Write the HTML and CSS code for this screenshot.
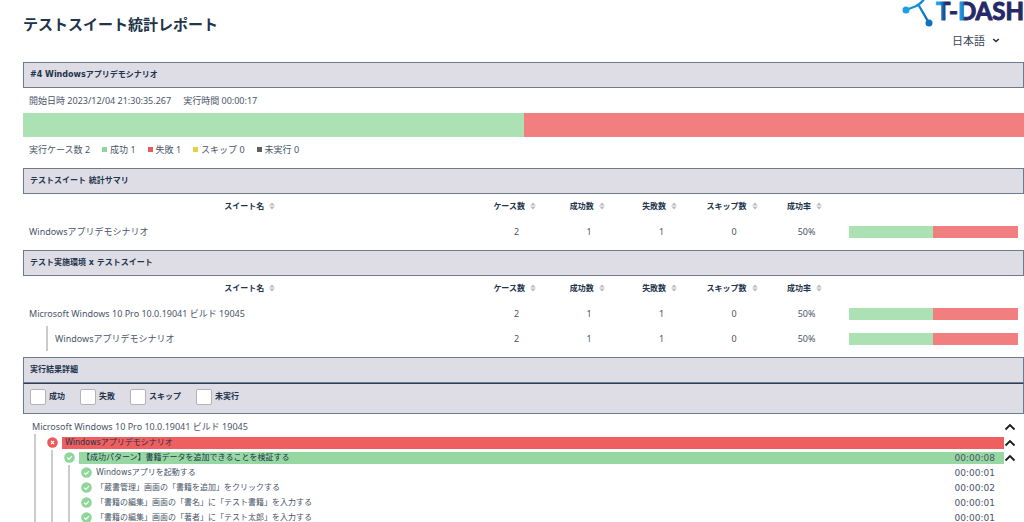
FILE: index.html
```html
<!DOCTYPE html>
<html lang="ja">
<head>
  <meta charset="UTF-8" />
  <meta name="viewport" content="width=device-width, initial-scale=1.0"/>
  <title>テストスイート統計レポート</title>
  <link rel="stylesheet" href="styles.css">
</head>
<body>
  <svg class="symbols" width="0" height="0" aria-hidden="true">
    <symbol id="sort" viewBox="0 0 6 8">
      <path d="M3 0.4 5.8 3.5H0.2zM3 7.6 0.2 4.5H5.8z" fill="#b9bdc6"/>
    </symbol>
    <symbol id="ok" viewBox="0 0 11 11">
      <circle cx="5.5" cy="5.5" r="5.3" fill="#8fd69b"/>
      <path d="M3.2 5.7 4.9 7.3 7.9 4.1" fill="none" stroke="#fff" stroke-width="1.2"/>
    </symbol>
    <symbol id="ng" viewBox="0 0 11 11">
      <circle cx="5.5" cy="5.5" r="5.3" fill="#ec5a5a"/>
      <path d="M4 4 7 7M7 4 4 7" fill="none" stroke="#fff" stroke-width="1.2"/>
    </symbol>
    <symbol id="up" viewBox="0 0 12 8">
      <path d="M1.5 6.5 6 2 10.5 6.5" fill="none" stroke="#1c1c1c" stroke-width="1.8"/>
    </symbol>
  </svg>

  <div class="page">
    <header class="header">
      <h1 class="title">テストスイート統計レポート</h1>
      <div class="brand">
        <svg class="logo" width="123" height="31" viewBox="0 0 123 31">
          <defs>
            <linearGradient id="mark" x1="0" y1="0" x2="1" y2="1">
              <stop offset="0" stop-color="#1ba4e6"/>
              <stop offset="1" stop-color="#0b66b5"/>
            </linearGradient>
            <linearGradient id="word" gradientUnits="userSpaceOnUse" x1="35" y1="0" x2="123" y2="0">
              <stop offset="0" stop-color="#12a5e8"/>
              <stop offset="0.04" stop-color="#12a5e8"/>
              <stop offset="0.11" stop-color="#232a66"/>
              <stop offset="0.25" stop-color="#232a66"/>
              <stop offset="0.26" stop-color="#129fe4"/>
              <stop offset="0.3" stop-color="#1a8bd6"/>
              <stop offset="0.33" stop-color="#232a66"/>
            </linearGradient>
          </defs>
          <path d="M5 10 14 6.500Q20 4 23-1M17 4 28 23" fill="none" stroke="url(#mark)" stroke-width="2.400"/>
          <circle cx="5" cy="10" r="3.500" fill="#1ba0e2"/>
          <circle cx="28" cy="23" r="3.500" fill="#0c74c0"/>
          <text class="logo-text" x="35" y="20">T-DASH</text>
        </svg>
        <select class="lang" aria-label="言語">
          <option>日本語</option>
          <option>English</option>
        </select>
      </div>
    </header>

    <section class="block">
      <h2 class="bar-title">#4 Windowsアプリデモシナリオ</h2>
      <p class="meta"><span>開始日時 2023/12/04 21:30:35.267</span><span>実行時間 00:00:17</span></p>
      <div class="ratio"><div class="pass" style="width: 50%"></div><div class="fail" style="width: 50%"></div></div>
      <ul class="legend">
        <li>実行ケース数 2</li>
        <li><i class="dot dot-pass"></i>成功 1</li>
        <li><i class="dot dot-fail"></i>失敗 1</li>
        <li><i class="dot dot-skip"></i>スキップ 0</li>
        <li><i class="dot dot-none"></i>未実行 0</li>
      </ul>
    </section>

    <section class="block">
      <h2 class="bar-title">テストスイート 統計サマリ</h2>
      <table class="stats">
        <thead>
          <tr>
            <th class="col-name">スイート名<svg class="sort"><use href="#sort"/></svg></th>
            <th>ケース数<svg class="sort"><use href="#sort"/></svg></th>
            <th>成功数<svg class="sort"><use href="#sort"/></svg></th>
            <th>失敗数<svg class="sort"><use href="#sort"/></svg></th>
            <th>スキップ数<svg class="sort"><use href="#sort"/></svg></th>
            <th>成功率<svg class="sort"><use href="#sort"/></svg></th>
            <th class="col-ratio"></th>
          </tr>
        </thead>
        <tbody>
          <tr>
            <td class="name">Windowsアプリデモシナリオ</td>
            <td>2</td><td>1</td><td>1</td><td>0</td><td>50%</td>
            <td><div class="ratio small"><div class="pass" style="width: 50%"></div><div class="fail" style="width: 50%"></div></div></td>
          </tr>
        </tbody>
      </table>
    </section>

    <section class="block">
      <h2 class="bar-title">テスト実施環境 x テストスイート</h2>
      <table class="stats">
        <thead>
          <tr>
            <th class="col-name">スイート名<svg class="sort"><use href="#sort"/></svg></th>
            <th>ケース数<svg class="sort"><use href="#sort"/></svg></th>
            <th>成功数<svg class="sort"><use href="#sort"/></svg></th>
            <th>失敗数<svg class="sort"><use href="#sort"/></svg></th>
            <th>スキップ数<svg class="sort"><use href="#sort"/></svg></th>
            <th>成功率<svg class="sort"><use href="#sort"/></svg></th>
            <th class="col-ratio"></th>
          </tr>
        </thead>
        <tbody>
          <tr>
            <td class="name">Microsoft Windows 10 Pro 10.0.19041 ビルド 19045</td>
            <td>2</td><td>1</td><td>1</td><td>0</td><td>50%</td>
            <td><div class="ratio small"><div class="pass" style="width: 50%"></div><div class="fail" style="width: 50%"></div></div></td>
          </tr>
          <tr>
            <td class="name child"><div class="child-name">Windowsアプリデモシナリオ</div></td>
            <td>2</td><td>1</td><td>1</td><td>0</td><td>50%</td>
            <td><div class="ratio small"><div class="pass" style="width: 50%"></div><div class="fail" style="width: 50%"></div></div></td>
          </tr>
        </tbody>
      </table>
    </section>

    <section class="block">
      <h2 class="bar-title">実行結果詳細</h2>
      <div class="filters">
        <label><input type="checkbox">成功</label>
        <label><input type="checkbox">失敗</label>
        <label><input type="checkbox">スキップ</label>
        <label><input type="checkbox">未実行</label>
      </div>
      <div class="tree">
        <div class="row root">
          <span class="label">Microsoft Windows 10 Pro 10.0.19041 ビルド 19045</span>
          <button class="toggle" aria-label="閉じる"><svg><use href="#up"/></svg></button>
        </div>
        <ul class="level first">
          <li>
            <div class="row">
              <svg class="state"><use href="#ng"/></svg>
              <span class="label band band-fail">Windowsアプリデモシナリオ</span>
              <button class="toggle" aria-label="閉じる"><svg><use href="#up"/></svg></button>
            </div>
            <ul class="level">
              <li>
                <div class="row">
                  <svg class="state"><use href="#ok"/></svg>
                  <span class="label band band-pass">【成功パターン】書籍データを追加できることを検証する<time>00:00:08</time></span>
                  <button class="toggle" aria-label="閉じる"><svg><use href="#up"/></svg></button>
                </div>
                <ul class="level steps">
                  <li class="row"><svg class="state"><use href="#ok"/></svg><span class="label">Windowsアプリを起動する<time>00:00:01</time></span></li>
                  <li class="row"><svg class="state"><use href="#ok"/></svg><span class="label">「蔵書管理」画面の「書籍を追加」をクリックする<time>00:00:02</time></span></li>
                  <li class="row"><svg class="state"><use href="#ok"/></svg><span class="label">「書籍の編集」画面の「書名」に「テスト書籍」を入力する<time>00:00:01</time></span></li>
                  <li class="row"><svg class="state"><use href="#ok"/></svg><span class="label">「書籍の編集」画面の「著者」に「テスト太郎」を入力する<time>00:00:01</time></span></li>
                </ul>
              </li>
            </ul>
          </li>
        </ul>
      </div>
    </section>
  </div>
</body>
</html>
```
FILE: styles.css
```css
* {
  box-sizing: border-box;
}

body {
  margin: 0;
  height: 100vh;
  overflow: hidden;
  background: #fff;
  color: #4a5568;
  font-family: "DejaVu Sans", "Noto Sans CJK JP", sans-serif;
  font-size: 8px;
  line-height: 12px;
}

h1, h2, p, ul {
  margin: 0;
  padding: 0;
}

ul {
  list-style: none;
}

.symbols {
  display: block;
}

.page {
  padding-left: 23px;
}

/* header */
.header {
  display: flex;
  justify-content: space-between;
  height: 62px;
}

.title {
  padding-top: 15px;
  color: #22344b;
  font-size: 15px;
  line-height: 20px;
}

.brand {
  display: flex;
  flex-direction: column;
  align-items: flex-end;
}

.logo {
  display: block;
}

.logo-text {
  fill: url(#word);
  stroke: url(#word);
  stroke-width: 1px;
  stroke-linejoin: round;
  font-family: Lato, sans-serif;
  font-size: 24px;
  font-weight: 700;
}

.lang {
  appearance: none;
  width: 50px;
  margin-right: 22px;
  padding: 0;
  border: 0;
  background: url("data:image/svg+xml,%3Csvg xmlns='http://www.w3.org/2000/svg' width='8' height='5'%3E%3Cpath d='M1.2 1 4 3.6 6.8 1' fill='none' stroke='%23222f44' stroke-width='1.5'/%3E%3C/svg%3E") no-repeat right 2px center;
  color: #3a4657;
  font-family: "Noto Sans CJK JP", sans-serif;
  font-size: 11px;
  line-height: 18px;
}

/* sections */
.block {
  margin-bottom: 6px;
}

.bar-title {
  height: 26px;
  padding: 0 6px;
  border: 1px solid #6e7b8e;
  background: #dedde6;
  color: #22344b;
  font-size: 8px;
  line-height: 24px;
}

.meta, .legend, .stats td, .root {
  font-family: "Noto Sans", "Noto Sans CJK JP", sans-serif;
  font-size: 9px;
}

.meta, .legend {
  display: flex;
  gap: 12px;
  height: 25px;
  padding-left: 6px;
  line-height: 25px;
}

.ratio {
  display: flex;
  height: 24px;
}

.ratio.small {
  height: 12px;
}

.pass {
  background: #ace1b4;
}

.fail {
  background: #f27f7f;
}

.dot {
  display: inline-block;
  width: 5px;
  height: 5px;
  margin-right: 3px;
  vertical-align: 1px;
}

.dot-pass {
  background: #8fd69b;
}

.dot-fail {
  background: #ec5a5a;
}

.dot-skip {
  background: #e8d044;
}

.dot-none {
  background: #606060;
}

/* tables */
.stats {
  width: 100%;
  border-collapse: collapse;
  table-layout: fixed;
}

.stats th, .stats td {
  height: 25px;
  padding: 0 6px;
  text-align: center;
}

.stats th {
  padding: 0 4px 0 0;
  color: #22344b;
  white-space: nowrap;
}

.stats .col-name {
  width: 45.7%;
}

.stats .col-ratio {
  width: 18.1%;
}

.stats .name {
  text-align: left;
}

.stats .child {
  padding-left: 23px;
}

.child-name {
  height: 25px;
  padding-left: 7px;
  border-left: 2px solid #ccc;
  line-height: 25px;
}

.sort {
  width: 6px;
  height: 8px;
  margin-left: 5px;
  vertical-align: middle;
}

/* details */
.filters {
  display: flex;
  align-items: center;
  gap: 15px;
  height: 31px;
  padding: 0 6px 3px;
  border: 1px solid #6e7b8e;
  border-top-color: #2f3f58;
  background: #dedde6;
  color: #22344b;
  font-weight: 700;
}

.filters label {
  display: flex;
  align-items: center;
  gap: 3px;
}

.filters input {
  appearance: none;
  width: 16px;
  height: 16px;
  margin: 0;
  border: 1px solid #b4b4b8;
  border-radius: 2px;
  background: #fff;
}

.filters input:checked {
  background: #8fd69b;
}

.tree {
  padding-top: 5px;
}

.row {
  display: flex;
  align-items: center;
  height: 15px;
}

.root {
  padding-left: 9px;
}

.level {
  margin-left: 4px;
  padding-left: 11px;
  border-left: 2px solid #ccc;
}

.level.first {
  margin-left: 11px;
  padding-top: 1px;
}

.state {
  flex: none;
  width: 11px;
  height: 11px;
  margin-right: 4px;
}

.label {
  display: flex;
  flex: 1;
  justify-content: space-between;
  padding-right: 9px;
}

.label time {
  font-size: 9px;
}

.band {
  padding-left: 3px;
  color: #22344b;
}

.band-fail {
  background: #f05f5f;
}

.band-pass {
  background: #97d8a2;
}

.band time {
  color: #4a5568;
}

.steps .label {
  padding-right: 29px;
}

.toggle {
  flex: none;
  width: 20px;
  height: 15px;
  padding: 0;
  border: 0;
  background: none;
}

.toggle svg {
  display: block;
  width: 12px;
  height: 8px;
}
```
